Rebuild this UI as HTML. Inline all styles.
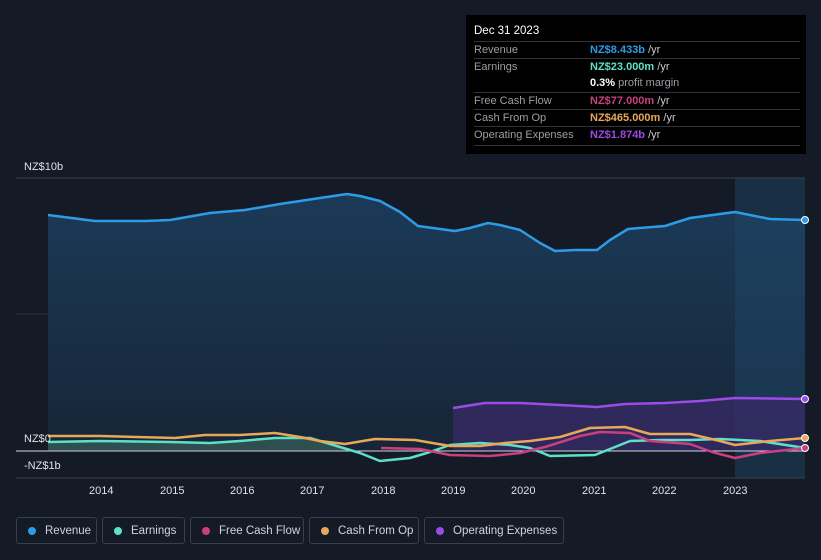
<!DOCTYPE html>
<html><head><style>
body{margin:0;width:821px;height:560px;background:#151b26;font-family:"Liberation Sans",sans-serif;overflow:hidden;position:relative}
.tt{position:absolute;left:466px;top:15px;width:340px;height:139px;background:#000;color:#9a9ea6;font-size:11px}
.tt .h{color:#fff;font-size:11.5px;position:absolute;left:8px;top:10px}
.row{position:absolute;left:8px;width:326px;border-top:1px solid #333;height:17px;line-height:17px}
.row span{position:absolute;left:116px;font-weight:bold}
.row i{font-style:normal;color:#ccc;font-weight:normal}
.lg{position:absolute;top:517px;height:27px;border:1px solid #3a3f4a;border-radius:3px;color:#cfd3da;font-size:11.5px;line-height:27px;box-sizing:border-box;padding-left:28px}
.lg b{position:absolute;left:11px;top:9px;width:8px;height:8px;border-radius:50%}
.ax{position:absolute;color:#e0e0e0;font-size:11px}
</style></head><body>
<svg width="821" height="560" style="position:absolute;left:0;top:0">
<defs><linearGradient id="g" x1="0" y1="0" x2="0" y2="1"><stop offset="0" stop-color="#1b3a58"/><stop offset="1" stop-color="#172536"/></linearGradient></defs>
<line x1="16" y1="178" x2="805" y2="178" stroke="#3a404a"/>
<line x1="16" y1="314" x2="805" y2="314" stroke="#2a303a"/>
<line x1="16" y1="478" x2="805" y2="478" stroke="#3a404a"/>
<path d="M48,215 L95,221 145,221 170,220 210,213 245,210 280,204 320,198 347,194 360,196 380,201 400,212 418,226 440,229 455,231 470,228 488,223 500,225 520,230 540,243 555,251 575,250 597,250 610,240 628,229 665,226 690,218 735,212 770,219 805,220 L805,451 48,451Z" fill="url(#g)"/>
<rect x="735" y="178" width="70" height="300" fill="#1e4a6a" opacity="0.45"/>
<path d="M453,408 L485,403 520,403 560,405 597,407 625,404 665,403 700,401 735,398 805,399 L805,451 453,451Z" fill="#3a2a6a" opacity="0.7"/>
<path d="M48,442 L100,441 170,442 210,443 240,441 275,438 310,438 340,447 350,451 48,451Z" fill="#3d6a60" opacity="0.6"/>
<line x1="16" y1="451" x2="805" y2="451" stroke="#cfd3da"/>
<path d="M48,215 L95,221 145,221 170,220 210,213 245,210 280,204 320,198 347,194 360,196 380,201 400,212 418,226 440,229 455,231 470,228 488,223 500,225 520,230 540,243 555,251 575,250 597,250 610,240 628,229 665,226 690,218 735,212 770,219 805,220" fill="none" stroke="#2e9be6" stroke-width="2.5" stroke-linejoin="round"/>
<path d="M453,408 L485,403 520,403 560,405 597,407 625,404 665,403 700,401 735,398 805,399" fill="none" stroke="#9c4ae8" stroke-width="2.5" stroke-linejoin="round"/>
<path d="M48,442 L100,441 170,442 210,443 240,441 275,438 310,438 340,447 360,453 380,461 410,458 430,452 450,445 480,443 510,445 530,448 550,456 595,455 610,449 630,441 660,440 690,440 720,439 760,441 805,448" fill="none" stroke="#5ee0c8" stroke-width="2.5" stroke-linejoin="round"/>
<path d="M381,448 L420,449 450,455 490,456 520,453 545,447 580,436 600,432 630,433 650,441 690,444 712,452 735,458 760,453 805,448" fill="none" stroke="#c8407e" stroke-width="2.5" stroke-linejoin="round"/>
<path d="M48,436 L100,436 175,438 205,435 240,435 275,433 300,437 320,441 345,444 375,439 415,440 450,446 480,446 505,443 530,441 560,437 590,428 625,427 650,434 690,434 720,441 735,445 770,441 805,438" fill="none" stroke="#e8a85a" stroke-width="2.5" stroke-linejoin="round"/>
<circle cx="805" cy="220" r="3.5" fill="#2e9be6" stroke="#fff"/>
<circle cx="805" cy="399" r="3.5" fill="#9c4ae8" stroke="#fff"/>
<circle cx="805" cy="438" r="3.5" fill="#e8a85a" stroke="#fff"/>
<circle cx="805" cy="448" r="3.5" fill="#c8407e" stroke="#fff"/>
</svg>
<div class="ax" style="left:24px;top:161px">NZ$10b</div>
<div class="ax" style="left:24px;top:433px">NZ$0</div>
<div class="ax" style="left:24px;top:460px">-NZ$1b</div>
<div class="ax" style="left:89px;top:485px">2014</div><div class="ax" style="left:160px;top:485px">2015</div><div class="ax" style="left:230px;top:485px">2016</div><div class="ax" style="left:300px;top:485px">2017</div><div class="ax" style="left:371px;top:485px">2018</div><div class="ax" style="left:441px;top:485px">2019</div><div class="ax" style="left:511px;top:485px">2020</div><div class="ax" style="left:582px;top:485px">2021</div><div class="ax" style="left:652px;top:485px">2022</div><div class="ax" style="left:723px;top:485px">2023</div>
<div class="tt"><div class="h">Dec 31 2023</div>
<div class="row" style="top:26px">Revenue<span style="color:#2e9be6">NZ$8.433b <i>/yr</i></span></div>
<div class="row" style="top:43px">Earnings<span style="color:#5ee0c8">NZ$23.000m <i>/yr</i></span></div>
<div class="row" style="top:60px;border:0"><span style="color:#fff">0.3% <i style="color:#9a9ea6">profit margin</i></span></div>
<div class="row" style="top:77px">Free Cash Flow<span style="color:#c8407e">NZ$77.000m <i>/yr</i></span></div>
<div class="row" style="top:94px">Cash From Op<span style="color:#e8a85a">NZ$465.000m <i>/yr</i></span></div>
<div class="row" style="top:111px">Operating Expenses<span style="color:#9c4ae8">NZ$1.874b <i>/yr</i></span></div>
<div class="row" style="top:130px;height:0"></div>
</div>
<div class="lg" style="left:16px;width:81px"><b style="background:#2e9be6"></b>Revenue</div>
<div class="lg" style="left:102px;width:83px"><b style="background:#5ee0c8"></b>Earnings</div>
<div class="lg" style="left:190px;width:114px"><b style="background:#c8407e"></b>Free Cash Flow</div>
<div class="lg" style="left:309px;width:110px"><b style="background:#e8a85a"></b>Cash From Op</div>
<div class="lg" style="left:424px;width:140px"><b style="background:#9c4ae8"></b>Operating Expenses</div>
</body></html>
